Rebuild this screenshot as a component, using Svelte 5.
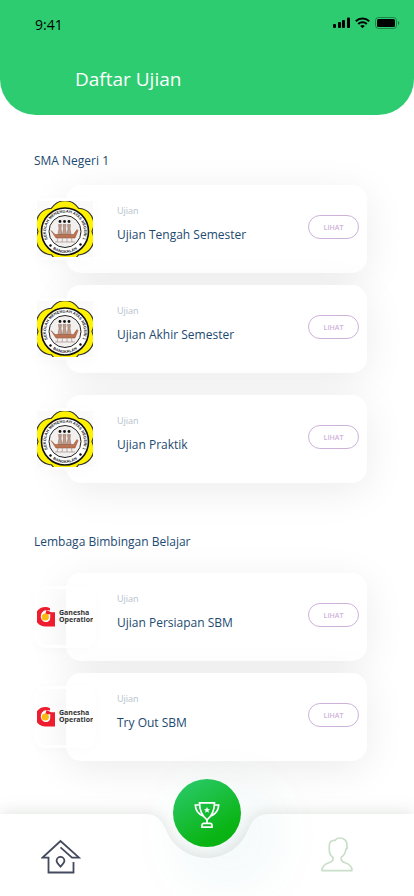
<script>
  const sections = [
    { title: 'SMA Negeri 1', logo: 'school', exams: ['Ujian Tengah Semester', 'Ujian Akhir Semester', 'Ujian Praktik'] },
    { title: 'Lembaga Bimbingan Belajar', logo: 'ganesha', exams: ['Ujian Persiapan SBM', 'Try Out SBM'] }
  ];
  const petals = [0, 60, 120, 180, 240, 300];
</script>

<div class="screen">
  <header>
    <div class="status">
      <span class="time">9:41</span>
      <svg width="67" height="13" viewBox="0 0 67 13" aria-hidden="true">
        <g fill="#000">
          <rect x="0" y="7" width="3" height="4" rx="1" />
          <rect x="5" y="5" width="3" height="6" rx="1" />
          <rect x="9" y="3" width="3" height="8" rx="1" />
          <rect x="14" y="0.5" width="3" height="10.5" rx="1" />
        </g>
        <g fill="none" stroke="#000" stroke-width="2">
          <path d="M22.8 4.2A10 10 0 0 1 36.2 4.2" />
          <path d="M25.2 7A6.2 6.2 0 0 1 33.8 7" />
        </g>
        <path d="M27.2 9a3.4 3.4 0 0 1 4.6 0L29.500 11.300Z" fill="#000" />
        <rect x="42.500" y="0.500" width="21" height="11" rx="3" fill="none" stroke="#000" opacity=".35" />
        <rect x="44" y="2" width="18" height="8" rx="1.500" fill="#000" />
        <path d="M65 4v4a2.200 2.200 0 0 0 0-4" fill="#000" opacity=".4" />
      </svg>
    </div>
    <h1>Daftar Ujian</h1>
  </header>

  <main>
    {#each sections as section}
      <section class={section.logo}>
        <h2>{section.title}</h2>
        <ul>
          {#each section.exams as exam, i}
            <li>
              <div class="card">
                <div class="info">
                  <small>Ujian</small>
                  <h3>{exam}</h3>
                </div>
                <button class="view" type="button" aria-label="Lihat {exam}">LIHAT</button>
              </div>
              <div class="thumb">
                {#if section.logo === 'school'}
                  <svg width="56" height="56" viewBox="0 0 56 56" aria-hidden="true">
                    <rect width="56" height="56" fill="#fafafa" />
                    <g stroke="#333" stroke-width="1.600">
                      {#each petals as angle}
                        <circle cx="28" cy="15.500" r="15.500" transform="rotate({angle} 28 30.500)" />
                      {/each}
                    </g>
                    <g fill="#fff200">
                      {#each petals as angle}
                        <circle cx="28" cy="15.500" r="15.200" transform="rotate({angle} 28 30.500)" />
                      {/each}
                    </g>
                    <circle cx="28" cy="30.500" r="23.500" fill="#fff" stroke="#111" stroke-width="1.600" />
                    <circle cx="28" cy="30.500" r="16" fill="#f3f0f0" stroke="#222" stroke-width="1" />
                    <path id="arc-top-{i}" d="M12 40.800A19 19 0 1 1 44 40.800" fill="none" />
                    <path id="arc-bottom-{i}" d="M12.500 45.300A21.500 21.500 0 0 0 43.500 45.300" fill="none" />
                    <text class="seal"><textPath href="#arc-top-{i}" startOffset="50%" text-anchor="middle">SEKOLAH MENENGAH ATAS NEGERI 1</textPath></text>
                    <text class="seal"><textPath href="#arc-bottom-{i}" startOffset="50%" text-anchor="middle">BANGKALAN</textPath></text>
                    <g fill="#111">
                      <circle cx="23" cy="20.500" r="1.400" /><circle cx="27.500" cy="20.500" r="1.400" /><circle cx="32" cy="20.500" r="1.400" />
                      <path d="M13 43l2 1-1 2-2-1zM42 43l2-1 1 2-2 1z" />
                    </g>
                    <path d="M21.500 23.500h3l-.5 4 1 6h-4l1-6zM26 23.500h3l-.5 4 1 6h-4l1-6zM30.500 23.500h3l-.5 4 1 6h-4l1-6z" fill="#c39c8a" stroke="#806a60" stroke-width=".5" />
                    <path d="M14 29.500l4 4h18.500l3.500-5 1 1-3 7.500H19z" fill="#c0724d" stroke="#8a4c35" stroke-width=".5" />
                    <path d="M22 33l-2 8M26 33l-1 8M30 33v8M34 33l1 8M18 41h20" fill="none" stroke="#9a8175" stroke-width=".6" />
                  </svg>
                {:else}
                  <svg width="56" height="56" viewBox="0 0 56 56" aria-hidden="true">
                    <path d="M13 22.200A9.800 9.800 0 1 0 9 40.500H18V26.500H13z" fill="#ed1c2e" />
                    <path d="M13.500 24.800C8 22.500 3.800 26 3.800 30.500C3.800 34 6.500 36 9 36C11.500 36 13.500 34 13.500 31V26.500z" fill="#fff" />
                    <path d="M9.500 24l-1.500 5 5.500-1v7H18v-8.500h-3.500z" fill="#ed1c2e" />
                    <circle cx="8.300" cy="31" r="3.600" fill="#fdb913" />
                    <text class="brand" x="22" y="29">Ganesha</text>
                    <text class="brand" x="22" y="36">Operation</text>
                  </svg>
                {/if}
              </div>
            </li>
          {/each}
        </ul>
      </section>
    {/each}
  </main>

  <nav aria-label="Menu utama">
    <div class="bar" aria-hidden="true">
      <span></span>
      <svg width="124" height="82" viewBox="0 0 124 82">
        <path d="M0 0C10 0 16 4 21 16A44 44 0 0 0 103 16C108 4 114 0 124 0V82H0Z" fill="#fff" />
      </svg>
      <span></span>
    </div>
    <a href="#beranda" aria-label="Beranda">
      <svg width="40" height="36" viewBox="0 0 40 36" fill="none" stroke="#444a5e" stroke-width="1.800" aria-hidden="true">
        <path d="M32.500 23V33.500H7.500V18.600H1.600L19.500 2L38 18.600H31L19.500 8.300" />
        <path d="M19.500 27.600C17.500 25.500 15.600 23.800 15.600 21.800a3.900 3.900 0 0 1 7.800 0C23.400 23.800 21.500 25.500 19.500 27.600Z" />
      </svg>
    </a>
    <button class="trophy" type="button" aria-label="Ujian">
      <svg width="26" height="28" viewBox="0 0 26 28" fill="none" stroke="#fff" stroke-width="1.700" aria-hidden="true">
        <path d="M5.500 1.800H20.500C20.500 10 18.500 14.500 13 18.800C7.500 14.500 5.500 10 5.500 1.800Z" />
        <path d="M5.500 4H1.300C1.500 9.500 4.500 13 9 15M20.500 4H24.700C24.500 9.500 21.500 13 17 15M13 18.500V22M8 26.200V24.500Q8 22.300 10 22.300H16Q18 22.300 18 24.500V26.200Z" />
        <path d="M13 6l.9 2 2.200.2-1.700 1.400.5 2.200-1.900-1.200-1.900 1.200.5-2.200-1.700-1.400 2.200-.2z" fill="#fff" stroke="none" />
      </svg>
    </button>
    <a href="#profil" aria-label="Profil">
      <svg width="32" height="35" viewBox="0 0 32 35" fill="none" stroke="#c9dfc9" stroke-width="1.700" stroke-linejoin="round" aria-hidden="true">
        <path d="M1 33.600H31C31 28.500 27 26.500 23.500 25.500C20 24.500 19.500 21.500 20.500 20C23 18.500 24.500 15.500 24.800 12.500C26.500 11.500 26.500 10 25.800 8.500C26.500 3.500 22.500 1 19 1C16.500 1 15 1.800 14 3.500C10 3 8 5.500 8.300 9V13C8.300 16.500 9.500 19 12 20.500C12.500 23 11.500 24.500 8.500 25.500C5 26.500 1 28.500 1 33.600Z" />
      </svg>
    </a>
  </nav>
</div>

<style>
  :global(body) {
    background: #fff;
  }

  .screen {
    display: flex;
    flex-direction: column;
    min-height: 100vh;
    overflow-x: clip;
    font-family: 'Open Sans', 'Noto Sans', sans-serif;
    color: #1c4a70;
  }

  header {
    box-sizing: border-box;
    height: 115px;
    background: #2ecc71;
    border-radius: 0 0 36px 36px;
  }

  .status {
    display: flex;
    justify-content: space-between;
    align-items: flex-start;
    padding: 17px 14px 0 35px;
  }

  .time {
    font-size: 14px;
    line-height: 16px;
    color: #000;
  }

  h1, h2, h3, ul {
    margin: 0;
    padding: 0;
    font-weight: 400;
  }

  h1 {
    padding: 32px 75px 0;
    font-size: 19px;
    line-height: 28px;
    color: #fff;
  }

  main {
    padding: 36px 47px 52px 34px;
  }

  section + section {
    margin-top: 49px;
  }

  h2 {
    font-size: 12px;
    line-height: 20px;
  }

  ul {
    display: grid;
    gap: 12px;
    padding-top: 14px;
    list-style: none;
  }

  .ganesha ul {
    padding-top: 21px;
  }

  .school li:nth-child(3) {
    margin-top: 10px;
  }

  li {
    position: relative;
  }

  .card {
    display: flex;
    justify-content: space-between;
    align-items: flex-start;
    box-sizing: border-box;
    height: 88px;
    margin-left: 32px;
    padding: 18px 8px 0 51px;
    background: #fff;
    border-radius: 15px;
    box-shadow: 0 8px 40px rgba(0, 0, 0, 0.08);
  }

  small {
    display: block;
    font-size: 9px;
    line-height: 16px;
    color: #b3c1cd;
  }

  h3 {
    padding-top: 6px;
    font-size: 12px;
    line-height: 20px;
  }

  .view {
    width: 51px;
    height: 24px;
    margin: 12px 0 0;
    padding: 2px 0 0;
    border: 1px solid #ceb2da;
    border-radius: 12px;
    background: none;
    font: 600 7px/12px 'Open Sans', sans-serif;
    color: #ceb2da;
  }

  .thumb {
    position: absolute;
    top: 13px;
    left: 0;
    border: 3px solid rgba(255, 255, 255, 0.85);
    border-radius: 12px;
    box-shadow: 0 2px 12px rgba(0, 0, 0, 0.02);
  }

  .thumb svg {
    display: block;
    overflow: hidden;
  }

  .seal {
    font: 700 4px 'Liberation Sans', sans-serif;
    fill: #222;
  }

  .brand {
    font: 700 7px 'Open Sans', sans-serif;
    fill: #333;
  }

  .ganesha .thumb svg {
    margin: -3px 0 3px;
  }

  nav {
    position: sticky;
    bottom: 0;
    display: grid;
    grid-template-columns: 1fr 68px 1fr;
    align-items: start;
    justify-items: center;
    box-sizing: border-box;
    height: 82px;
    margin-top: auto;
  }

  .bar {
    position: absolute;
    inset: 0;
    display: flex;
    filter: drop-shadow(0 -2px 8px rgba(60, 80, 60, 0.15));
  }

  .bar span {
    flex: 1;
    background: #fff;
  }

  nav a {
    position: relative;
    padding-top: 25px;
  }

  nav a:first-of-type {
    margin-right: 52px;
  }

  nav a:last-of-type {
    padding-top: 23px;
    margin-left: 18px;
  }

  nav a svg,
  .trophy svg {
    display: block;
  }

  .trophy {
    position: relative;
    display: grid;
    place-items: center;
    width: 68px;
    height: 68px;
    margin: -35px 0 0;
    padding: 3px 0 0;
    border: 0;
    border-radius: 50%;
    background: linear-gradient(150deg, #2ecc71, #0ab414 75%, #08b010);
    box-shadow: 20px 22px 70px rgba(30, 150, 160, 0.12);
  }
</style>
